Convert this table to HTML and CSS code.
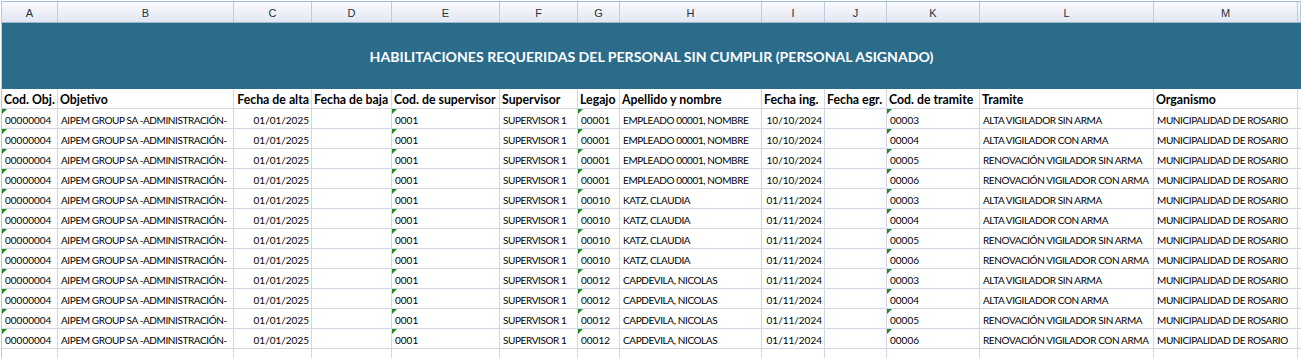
FILE: index.html
```html
<!DOCTYPE html>
<html lang="es">
<head>
<meta charset="utf-8">
<title>Habilitaciones requeridas</title>
<link rel="stylesheet" href="styles.css">
</head>
<body>
<div class="sheet">
  <div class="row colhead">
    <div class="h">A</div><div class="h">B</div><div class="h">C</div><div class="h">D</div><div class="h">E</div><div class="h">F</div><div class="h">G</div><div class="h">H</div><div class="h">I</div><div class="h">J</div><div class="h">K</div><div class="h">L</div><div class="h">M</div><div class="h"></div>
  </div>
  <div class="title">HABILITACIONES REQUERIDAS DEL PERSONAL SIN CUMPLIR (PERSONAL ASIGNADO)</div>
  <div class="row head">
    <div class="cell">Cod. Obj.</div><div class="cell">Objetivo</div><div class="cell r">Fecha de alta</div><div class="cell">Fecha de baja</div><div class="cell">Cod. de supervisor</div><div class="cell">Supervisor</div><div class="cell">Legajo</div><div class="cell">Apellido y nombre</div><div class="cell">Fecha ing.</div><div class="cell">Fecha egr.</div><div class="cell">Cod. de tramite</div><div class="cell">Tramite</div><div class="cell">Organismo</div><div class="cell"></div>
  </div>

  <div class="row data">
    <div class="cell num tri">00000004</div><div class="cell">AIPEM GROUP SA -ADMINISTRACIÓN-</div><div class="cell num r">01/01/2025</div><div class="cell"></div><div class="cell num tri">0001</div><div class="cell">SUPERVISOR 1</div><div class="cell num tri">00001</div><div class="cell">EMPLEADO 00001, NOMBRE</div><div class="cell num r">10/10/2024</div><div class="cell"></div><div class="cell num tri">00003</div><div class="cell">ALTA VIGILADOR SIN ARMA</div><div class="cell">MUNICIPALIDAD DE ROSARIO</div><div class="cell"></div>
  </div>
  <div class="row data">
    <div class="cell num tri">00000004</div><div class="cell">AIPEM GROUP SA -ADMINISTRACIÓN-</div><div class="cell num r">01/01/2025</div><div class="cell"></div><div class="cell num tri">0001</div><div class="cell">SUPERVISOR 1</div><div class="cell num tri">00001</div><div class="cell">EMPLEADO 00001, NOMBRE</div><div class="cell num r">10/10/2024</div><div class="cell"></div><div class="cell num tri">00004</div><div class="cell">ALTA VIGILADOR CON ARMA</div><div class="cell">MUNICIPALIDAD DE ROSARIO</div><div class="cell"></div>
  </div>
  <div class="row data">
    <div class="cell num tri">00000004</div><div class="cell">AIPEM GROUP SA -ADMINISTRACIÓN-</div><div class="cell num r">01/01/2025</div><div class="cell"></div><div class="cell num tri">0001</div><div class="cell">SUPERVISOR 1</div><div class="cell num tri">00001</div><div class="cell">EMPLEADO 00001, NOMBRE</div><div class="cell num r">10/10/2024</div><div class="cell"></div><div class="cell num tri">00005</div><div class="cell">RENOVACIÓN VIGILADOR SIN ARMA</div><div class="cell">MUNICIPALIDAD DE ROSARIO</div><div class="cell"></div>
  </div>
  <div class="row data">
    <div class="cell num tri">00000004</div><div class="cell">AIPEM GROUP SA -ADMINISTRACIÓN-</div><div class="cell num r">01/01/2025</div><div class="cell"></div><div class="cell num tri">0001</div><div class="cell">SUPERVISOR 1</div><div class="cell num tri">00001</div><div class="cell">EMPLEADO 00001, NOMBRE</div><div class="cell num r">10/10/2024</div><div class="cell"></div><div class="cell num tri">00006</div><div class="cell">RENOVACIÓN VIGILADOR CON ARMA</div><div class="cell">MUNICIPALIDAD DE ROSARIO</div><div class="cell"></div>
  </div>
  <div class="row data">
    <div class="cell num tri">00000004</div><div class="cell">AIPEM GROUP SA -ADMINISTRACIÓN-</div><div class="cell num r">01/01/2025</div><div class="cell"></div><div class="cell num tri">0001</div><div class="cell">SUPERVISOR 1</div><div class="cell num tri">00010</div><div class="cell">KATZ, CLAUDIA</div><div class="cell num r">01/11/2024</div><div class="cell"></div><div class="cell num tri">00003</div><div class="cell">ALTA VIGILADOR SIN ARMA</div><div class="cell">MUNICIPALIDAD DE ROSARIO</div><div class="cell"></div>
  </div>
  <div class="row data">
    <div class="cell num tri">00000004</div><div class="cell">AIPEM GROUP SA -ADMINISTRACIÓN-</div><div class="cell num r">01/01/2025</div><div class="cell"></div><div class="cell num tri">0001</div><div class="cell">SUPERVISOR 1</div><div class="cell num tri">00010</div><div class="cell">KATZ, CLAUDIA</div><div class="cell num r">01/11/2024</div><div class="cell"></div><div class="cell num tri">00004</div><div class="cell">ALTA VIGILADOR CON ARMA</div><div class="cell">MUNICIPALIDAD DE ROSARIO</div><div class="cell"></div>
  </div>
  <div class="row data">
    <div class="cell num tri">00000004</div><div class="cell">AIPEM GROUP SA -ADMINISTRACIÓN-</div><div class="cell num r">01/01/2025</div><div class="cell"></div><div class="cell num tri">0001</div><div class="cell">SUPERVISOR 1</div><div class="cell num tri">00010</div><div class="cell">KATZ, CLAUDIA</div><div class="cell num r">01/11/2024</div><div class="cell"></div><div class="cell num tri">00005</div><div class="cell">RENOVACIÓN VIGILADOR SIN ARMA</div><div class="cell">MUNICIPALIDAD DE ROSARIO</div><div class="cell"></div>
  </div>
  <div class="row data">
    <div class="cell num tri">00000004</div><div class="cell">AIPEM GROUP SA -ADMINISTRACIÓN-</div><div class="cell num r">01/01/2025</div><div class="cell"></div><div class="cell num tri">0001</div><div class="cell">SUPERVISOR 1</div><div class="cell num tri">00010</div><div class="cell">KATZ, CLAUDIA</div><div class="cell num r">01/11/2024</div><div class="cell"></div><div class="cell num tri">00006</div><div class="cell">RENOVACIÓN VIGILADOR CON ARMA</div><div class="cell">MUNICIPALIDAD DE ROSARIO</div><div class="cell"></div>
  </div>
  <div class="row data">
    <div class="cell num tri">00000004</div><div class="cell">AIPEM GROUP SA -ADMINISTRACIÓN-</div><div class="cell num r">01/01/2025</div><div class="cell"></div><div class="cell num tri">0001</div><div class="cell">SUPERVISOR 1</div><div class="cell num tri">00012</div><div class="cell">CAPDEVILA, NICOLAS</div><div class="cell num r">01/11/2024</div><div class="cell"></div><div class="cell num tri">00003</div><div class="cell">ALTA VIGILADOR SIN ARMA</div><div class="cell">MUNICIPALIDAD DE ROSARIO</div><div class="cell"></div>
  </div>
  <div class="row data">
    <div class="cell num tri">00000004</div><div class="cell">AIPEM GROUP SA -ADMINISTRACIÓN-</div><div class="cell num r">01/01/2025</div><div class="cell"></div><div class="cell num tri">0001</div><div class="cell">SUPERVISOR 1</div><div class="cell num tri">00012</div><div class="cell">CAPDEVILA, NICOLAS</div><div class="cell num r">01/11/2024</div><div class="cell"></div><div class="cell num tri">00004</div><div class="cell">ALTA VIGILADOR CON ARMA</div><div class="cell">MUNICIPALIDAD DE ROSARIO</div><div class="cell"></div>
  </div>
  <div class="row data">
    <div class="cell num tri">00000004</div><div class="cell">AIPEM GROUP SA -ADMINISTRACIÓN-</div><div class="cell num r">01/01/2025</div><div class="cell"></div><div class="cell num tri">0001</div><div class="cell">SUPERVISOR 1</div><div class="cell num tri">00012</div><div class="cell">CAPDEVILA, NICOLAS</div><div class="cell num r">01/11/2024</div><div class="cell"></div><div class="cell num tri">00005</div><div class="cell">RENOVACIÓN VIGILADOR SIN ARMA</div><div class="cell">MUNICIPALIDAD DE ROSARIO</div><div class="cell"></div>
  </div>
  <div class="row data">
    <div class="cell num tri">00000004</div><div class="cell">AIPEM GROUP SA -ADMINISTRACIÓN-</div><div class="cell num r">01/01/2025</div><div class="cell"></div><div class="cell num tri">0001</div><div class="cell">SUPERVISOR 1</div><div class="cell num tri">00012</div><div class="cell">CAPDEVILA, NICOLAS</div><div class="cell num r">01/11/2024</div><div class="cell"></div><div class="cell num tri">00006</div><div class="cell">RENOVACIÓN VIGILADOR CON ARMA</div><div class="cell">MUNICIPALIDAD DE ROSARIO</div><div class="cell"></div>
  </div>

  <div class="row data filler">
    <div class="cell"></div><div class="cell"></div><div class="cell"></div><div class="cell"></div><div class="cell"></div><div class="cell"></div><div class="cell"></div><div class="cell"></div><div class="cell"></div><div class="cell"></div><div class="cell"></div><div class="cell"></div><div class="cell"></div><div class="cell"></div>
  </div>
</div>
</body>
</html>
```

FILE: styles.css
```css
:root {
  --cols: 56px 176px 78px 80px 108px 78px 42px 142px 63px 62px 93px 174px 144px 1fr;
  --grid: #d0d7e5;
}

html, body {
  margin: 0;
  height: 100%;
  background: #ffffff;
  overflow: hidden;
}

body {
  padding: 1px 0 0 1px;
  box-sizing: border-box;
  font-family: Lato, "Liberation Sans", sans-serif;
  color: #000000;
}

.sheet {
  height: 100%;
  box-sizing: border-box;
  border-left: 1px solid #b9c7db;
  border-top: 1px solid #9fb9d4;
  display: flex;
  flex-direction: column;
}

.row {
  display: grid;
  grid-template-columns: var(--cols);
  height: 20px;
  flex: none;
}

.colhead {
  height: 21px;
  box-sizing: border-box;
  background: linear-gradient(#fafbfe, #e2e6f1);
  border-bottom: 1px solid #9fb6cf;
}

.colhead .h {
  border-right: 1px solid #bccbdd;
  display: flex;
  align-items: center;
  justify-content: center;
  font-family: "Liberation Sans", sans-serif;
  font-size: 11px;
  color: #27313d;
  padding-top: 2px;
}

.title {
  height: 66px;
  flex: none;
  background: #2b6c8b;
  color: #ffffff;
  display: flex;
  align-items: center;
  justify-content: center;
  font-weight: 700;
  font-size: 14.1px;
}

.cell {
  border-right: 1px solid var(--grid);
  border-bottom: 1px solid var(--grid);
  box-sizing: border-box;
  display: flex;
  align-items: flex-end;
  padding: 0 2px 2px 3px;
  font-size: 10px;
  line-height: 1.2;
  letter-spacing: -0.4px;
  white-space: nowrap;
  overflow: hidden;
  position: relative;
}

.num {
  letter-spacing: 0;
}

.r {
  justify-content: flex-end;
}

.tri::before {
  content: "";
  position: absolute;
  left: 0;
  top: 0;
  border-top: 5px solid #1d8a1d;
  border-right: 5px solid transparent;
}

.head .cell {
  font-weight: 700;
  font-size: 12.3px;
  letter-spacing: 0;
  padding: 0 2px 0 2px;
}

.filler {
  flex: 1;
  height: auto;
}

.filler .cell {
  border-bottom: none;
}
```
